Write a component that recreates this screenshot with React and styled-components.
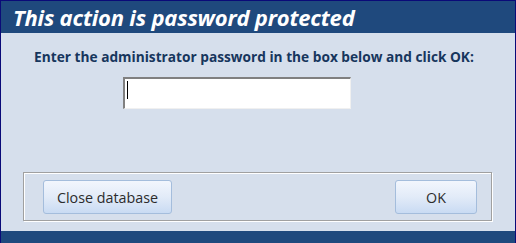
import React from 'react'
import styled, { createGlobalStyle } from 'styled-components'

const GlobalStyle = createGlobalStyle`
    html, body {
        margin: 0;
        padding: 0;
        background: #d6dfec;
    }
    * {
        box-sizing: border-box;
    }
`

const Window = styled.div`
    width: 516px;
    height: 243px;
    display: flex;
    flex-direction: column;
    border: 1px solid #0a0a78;
    border-bottom: none;
    background-color: #d6dfec;
    font-family: "Open Sans", "Noto Sans", sans-serif;
`

const TitleBar = styled.div`
    height: 32px;
    flex-shrink: 0;
    background-color: #1f497d;
    color: #fff;
    display: flex;
    align-items: center;
    padding-left: 12px;
    font-size: 22px;
    font-weight: bold;
    font-style: italic;
    letter-spacing: -0.2px;
    line-height: 32px;
`

const Content = styled.div`
    flex: 1;
    display: flex;
    flex-direction: column;
    padding-top: 15px;
`

const Prompt = styled.div`
    text-align: center;
    color: #17365d;
    font-size: 13.7px;
    font-weight: bold;
    line-height: 17px;
    padding-right: 8px;
`

const InputWrap = styled.div`
    position: relative;
    margin: 12px 0 0 122px;
    width: 228px;
    height: 32px;
`

const PasswordInput = styled.input`
    width: 100%;
    height: 100%;
    background: #fff;
    border: none;
    border-top: 2px solid #808080;
    border-left: 2px solid #808080;
    border-right: 1px solid #f0f0f0;
    border-bottom: 1px solid #f0f0f0;
    outline: none;
    padding: 0 2px;
    font-size: 14px;
    caret-color: transparent;
`

const Caret = styled.span`
    position: absolute;
    left: 4px;
    top: 4px;
    width: 1px;
    height: 18px;
    background: #000;
`

const ButtonFrame = styled.div`
    margin: 63px 0 0 22px;
    width: 469px;
    height: 49px;
    border: 1px solid #a0a0a0;
    box-shadow: inset 1px 1px 0 #fff, 1px 1px 0 #fff;
    display: flex;
    justify-content: space-between;
    align-items: flex-start;
    padding: 7px 14px 0 19px;
`

const Button = styled.button`
    width: ${props => props.w}px;
    height: 34px;
    border: 1px solid #a4bddc;
    border-radius: 3px;
    background: linear-gradient(to bottom, #f2f6fd 0%, #e2ebf8 50%, #c9dbf3 100%);
    color: #2c2c2c;
    font-family: "Open Sans", "Noto Sans", sans-serif;
    font-size: 14.3px;
    padding: 0;
    cursor: pointer;
`

const BottomBar = styled.div`
    height: 12px;
    flex-shrink: 0;
    background-color: #1f497d;
`

export default function App() {
    return (
        <>
            <GlobalStyle/>
            <Window>
                <TitleBar>This action is password protected</TitleBar>
                <Content>
                    <Prompt>Enter the administrator password in the box below and click OK:</Prompt>
                    <InputWrap>
                        <PasswordInput type="password"/>
                        <Caret/>
                    </InputWrap>
                    <ButtonFrame>
                        <Button w={129}>Close database</Button>
                        <Button w={82}>OK</Button>
                    </ButtonFrame>
                </Content>
                <BottomBar/>
            </Window>
        </>
    )
}
